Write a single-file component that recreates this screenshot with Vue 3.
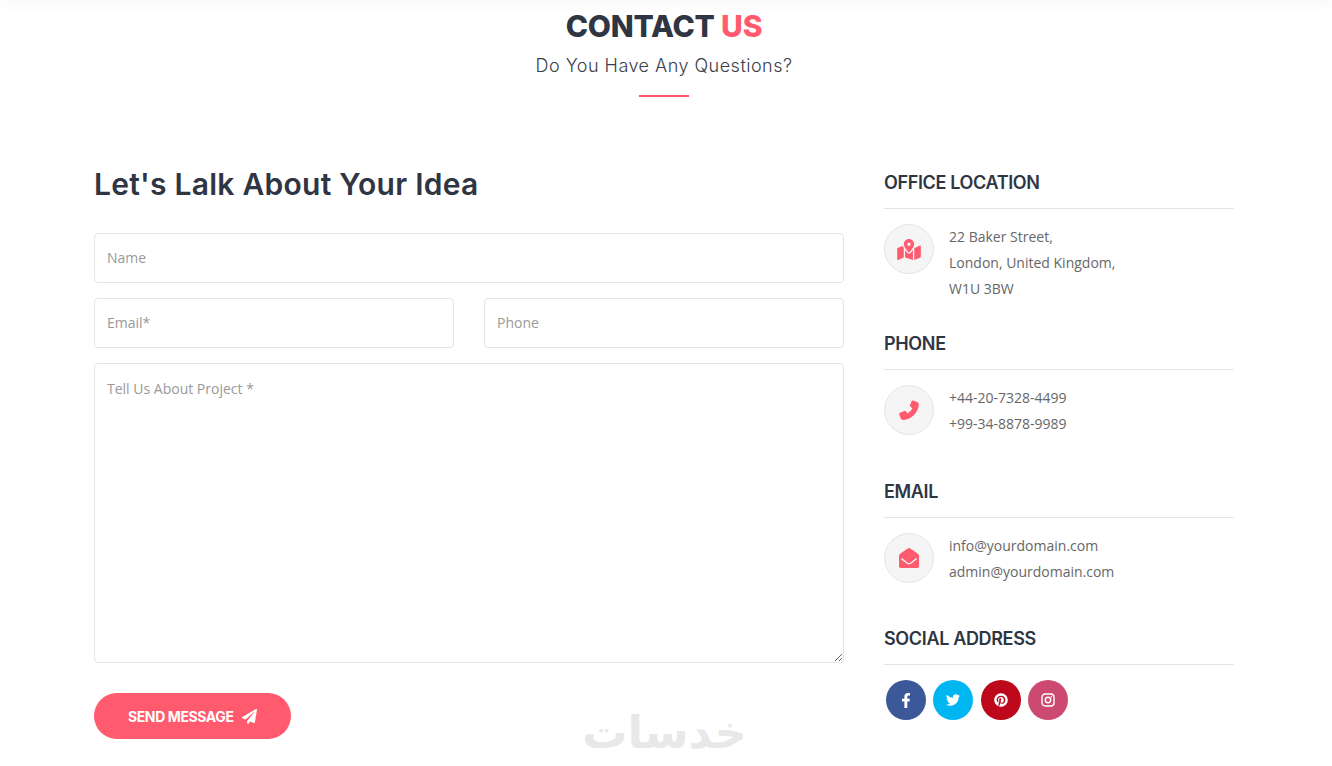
<script setup>
const locations = ['22 Baker Street,', 'London, United Kingdom,', 'W1U 3BW']
const phones = ['+44-20-7328-4499', '+99-34-8878-9989']
const emails = ['info@yourdomain.com', 'admin@yourdomain.com']
</script>

<template>
  <div class="page">
    <div class="topbar"></div>
    <header class="title">
      <h1>CONTACT <span>US</span></h1>
      <p>Do You Have Any Questions?</p>
      <i class="rule"></i>
    </header>
    <main class="columns">
      <form class="form" @submit.prevent>
        <h2>Let's Lalk About Your Idea</h2>
        <input class="field" placeholder="Name" />
        <div class="pair">
          <input class="field" placeholder="Email*" />
          <input class="field" placeholder="Phone" />
        </div>
        <textarea class="field area" placeholder="Tell Us About Project *"></textarea>
        <button class="send" type="submit">
          SEND MESSAGE
          <svg viewBox="0 0 512 512" width="15" height="15"><path fill="currentColor" d="M476 3.2L12.5 270.6c-18.1 10.4-15.8 35.6 2.2 43.2L121 358.4l287.3-253.2c5.5-4.9 13.3 2.6 8.6 8.3L176 407v80.5c0 23.6 28.5 32.9 42.5 15.8L282 426l124.6 52.2c14.2 6 30.4-2.9 33-18.2l72-432C515 7.8 493.3-6.8 476 3.2z"/></svg>
        </button>
      </form>
      <aside class="side">
        <section class="block">
          <h3>OFFICE LOCATION</h3>
          <div class="item">
            <span class="badge"><svg viewBox="0 0 576 512" width="24" height="21"><path fill="currentColor" d="M288 0c-69.59 0-126 56.41-126 126 0 56.26 82.35 158.8 113.9 196.02 6.39 7.54 17.82 7.54 24.2 0C331.65 284.8 414 182.26 414 126 414 56.41 357.59 0 288 0zm0 168c-23.2 0-42-18.8-42-42s18.8-42 42-42 42 18.8 42 42-18.8 42-42 42zM20.12 215.95A32.006 32.006 0 0 0 0 245.66v250.32c0 11.32 11.43 19.06 21.94 14.86L160 448V214.92c-8.84-15.98-16.07-31.54-21.25-46.42L20.12 215.95zM288 359.67c-14.07 0-27.38-6.18-36.51-16.96-19.66-23.2-40.57-49.62-59.49-76.72V448l192 64V266c-18.92 27.09-39.82 53.52-59.49 76.72-9.13 10.77-22.44 16.95-36.51 16.95zm266.06-198.51L416 224v288l139.88-55.95A31.996 31.996 0 0 0 576 426.34V176.02c0-11.32-11.43-19.06-21.94-14.86z"/></svg></span>
            <div class="lines"><div v-for="l in locations" :key="l">{{ l }}</div></div>
          </div>
        </section>
        <section class="block">
          <h3>PHONE</h3>
          <div class="item">
            <span class="badge"><svg viewBox="0 0 20 20" width="20" height="20"><path fill="currentColor" d="M14 .6L18 2C19.3 2.5 20 3.6 19.8 5C18.8 13 12.5 19.3 4.6 19.9C3 20 2 19.3 1.5 18L.2 14.4C0 13.7 .3 13 1 12.7L5.4 10.9C6 10.7 6.6 10.9 7 11.4L8.4 13.2C10.6 12.2 12.4 10.3 13.4 8.2L11.5 6.8C11 6.4 10.8 5.8 11 5.2L12.6 1.3C12.9 .6 13.4 .4 14 .6Z"/></svg></span>
            <div class="lines"><div v-for="l in phones" :key="l">{{ l }}</div></div>
          </div>
        </section>
        <section class="block">
          <h3>EMAIL</h3>
          <div class="item">
            <span class="badge"><svg viewBox="0 0 512 512" width="20" height="20"><path fill="currentColor" d="M512 464c0 26.51-21.49 48-48 48H48c-26.51 0-48-21.49-48-48V200.724a48 48 0 0 1 18.387-37.776c24.913-19.529 45.501-35.365 164.2-121.511C199.412 29.17 232.797-.347 256 .003c23.198-.354 56.596 29.172 73.413 41.433 118.687 86.137 139.303 101.995 164.2 121.512A48 48 0 0 1 512 200.724V464zm-65.666-196.605c-2.563-3.728-7.7-4.595-11.339-1.907-22.845 16.873-55.462 40.705-105.582 77.079-16.825 12.266-50.21 41.781-73.413 41.43-23.211.344-56.559-29.143-73.413-41.43-50.114-36.37-82.734-60.204-105.582-77.079-3.639-2.688-8.776-1.821-11.339 1.907l-9.072 13.196a7.998 7.998 0 0 0 1.839 10.967c22.887 16.899 55.454 40.69 105.303 76.868 20.274 14.781 56.524 47.813 92.264 47.573 35.724.242 71.961-32.771 92.263-47.573 49.85-36.179 82.418-59.97 105.303-76.868a7.998 7.998 0 0 0 1.839-10.967l-9.071-13.196z"/></svg></span>
            <div class="lines"><div v-for="l in emails" :key="l">{{ l }}</div></div>
          </div>
        </section>
        <section class="block social">
          <h3>SOCIAL ADDRESS</h3>
          <div class="links">
            <a class="fb"><svg viewBox="0 0 320 512" width="10" height="15"><path fill="currentColor" d="M279.14 288l14.22-92.66h-88.91v-60.13c0-25.35 12.42-50.06 52.24-50.06h40.42V6.26S260.43 0 225.36 0c-73.22 0-121.08 44.38-121.08 124.72v70.62H22.89V288h81.39v224h100.17V288z"/></svg></a>
            <a class="tw"><svg viewBox="0 0 512 512" width="14" height="14"><path fill="currentColor" d="M459.37 151.716c.325 4.548.325 9.097.325 13.645 0 138.72-105.583 298.558-298.558 298.558-59.452 0-114.68-17.219-161.137-47.106 8.447.974 16.568 1.299 25.34 1.299 49.055 0 94.213-16.568 130.274-44.832-46.132-.975-84.792-31.188-98.112-72.772 6.498.974 12.995 1.624 19.818 1.624 9.421 0 18.843-1.3 27.614-3.573-48.081-9.747-84.143-51.98-84.143-102.985v-1.299c13.969 7.797 30.214 12.67 47.431 13.319-28.264-18.843-46.781-51.005-46.781-87.391 0-19.492 5.197-37.36 14.294-52.954 51.655 63.675 129.3 105.258 216.365 109.807-1.624-7.797-2.599-15.918-2.599-24.04 0-57.828 46.782-104.934 104.934-104.934 30.213 0 57.502 12.67 76.67 33.137 23.715-4.548 46.456-13.32 66.599-25.34-7.798 24.366-24.366 44.833-46.132 57.827 21.117-2.273 41.584-8.122 60.426-16.243-14.292 20.791-32.161 39.308-52.628 54.253z"/></svg></a>
            <a class="pi"><svg viewBox="0 0 496 512" width="14" height="14"><path fill="currentColor" d="M496 256c0 137-111 248-248 248-25.6 0-50.2-3.9-73.4-11.1 10.1-16.5 25.2-43.5 30.8-65 3-11.6 15.4-59 15.4-59 8.1 15.4 31.7 28.5 56.8 28.5 74.8 0 128.7-68.8 128.7-154.3 0-81.9-66.9-143.2-152.9-143.2-107 0-163.9 71.8-163.9 150.1 0 36.4 19.4 81.7 50.3 96.1 4.7 2.2 7.2 1.2 8.3-3.3.8-3.4 5-20.3 6.9-28.1.6-2.5.3-4.7-1.7-7.1-10.1-12.5-18.3-35.3-18.3-56.6 0-54.7 41.4-107.6 112-107.6 60.9 0 103.6 41.5 103.6 100.9 0 67.1-33.9 113.6-78 113.6-24.3 0-42.6-20.1-36.7-44.8 7-29.5 20.5-61.3 20.5-82.6 0-19-10.2-34.9-31.4-34.9-24.9 0-44.9 25.7-44.9 60.2 0 22 7.4 36.8 7.4 36.8s-24.5 103.8-29 123.2c-5 21.4-3 51.6-.9 71.2C65.4 450.9 0 361.1 0 256 0 119 111 8 248 8s248 111 248 248z"/></svg></a>
            <a class="ig"><svg viewBox="0 0 14 14" width="14" height="14"><rect x="1" y="1" width="12" height="12" rx="3.2" fill="none" stroke="currentColor" stroke-width="1.4"/><circle cx="7" cy="7" r="2.7" fill="none" stroke="currentColor" stroke-width="1.4"/><circle cx="10.4" cy="3.6" r=".8" fill="currentColor"/></svg></a>
          </div>
        </section>
      </aside>
    </main>
    <div class="watermark" dir="rtl" lang="fa">خدسات</div>
  </div>
</template>

<style>
html, body { margin: 0; background: #fff; overflow: hidden; }
</style>

<style scoped>
.page {
  position: relative;
  height: 766px;
  overflow: hidden;
  background: #fff;
  font-family: "Open Sans", "Liberation Sans", sans-serif;
  font-size: 14px;
  color: #666;
}
.topbar {
  height: 0;
  box-shadow: 0 0 14px 3px rgba(0, 0, 0, 0.05);
}
.title {
  width: 1328px;
  padding-top: 8px;
  text-align: center;
  color: #2f3542;
}
h1 {
  margin: 0;
  font-family: Inter, sans-serif;
  font-size: 30px;
  font-weight: 800;
  line-height: 36px;
  letter-spacing: -0.2px;
}
h1 span, .rule { color: #ff5a6e; }
.title p {
  margin: 9px 0 0;
  font-family: Inter, sans-serif;
  font-size: 18px;
  font-weight: 300;
  line-height: 26px;
  letter-spacing: 0.48px;
  color: #3a404c;
}
.rule {
  display: block;
  width: 50px;
  height: 2px;
  margin: 16px auto 0;
  background: #ff5a6e;
}
.columns {
  display: flex;
  gap: 40px;
  padding: 0 98px 0 94px;
  margin-top: 69px;
}
.form { width: 750px; flex: none; }
h2 {
  margin: 0 0 31px;
  font-family: Inter, sans-serif;
  font-size: 30px;
  font-weight: 600;
  line-height: 36px;
  letter-spacing: 0.26px;
  color: #2f3542;
}
.field {
  display: block;
  box-sizing: border-box;
  width: 100%;
  height: 50px;
  padding: 0 12px 2px;
  border: 1px solid #e5e5e5;
  border-radius: 4px;
  background: #fff;
  font: 14px/20px "Open Sans", sans-serif;
  color: #666;
  outline: none;
}
.field::placeholder { color: #999; opacity: 1; }
.pair {
  display: flex;
  gap: 30px;
  margin-top: 15px;
}
.area {
  height: 300px;
  margin-top: 15px;
  padding: 15px 12px;
}
.send {
  display: flex;
  align-items: center;
  gap: 8px;
  width: 197px;
  height: 46px;
  margin-top: 30px;
  padding: 0 0 0 34px;
  border: 0;
  border-radius: 23px;
  background: #ff5a6e;
  color: #fff;
  font-family: Inter, sans-serif;
  font-size: 14px;
  font-weight: 700;
  letter-spacing: -0.4px;
  white-space: nowrap;
}
.side { width: 350px; flex: none; padding-top: 6px; }
.block { margin-top: 31px; }
.block:first-child { margin-top: 0; }
.block.social { margin-top: 30px; }
h3 {
  margin: 0 0 15px;
  padding-bottom: 14px;
  border-bottom: 1px solid #e5e5e5;
  font-family: Inter, sans-serif;
  font-size: 18px;
  font-weight: 600;
  line-height: 22px;
  letter-spacing: -0.35px;
  color: #2f3542;
}
.item {
  display: flex;
  gap: 15px;
  min-height: 65px;
}
.badge {
  display: flex;
  align-items: center;
  justify-content: center;
  box-sizing: border-box;
  width: 50px;
  height: 50px;
  flex: none;
  border: 1px solid #e5e5e5;
  border-radius: 50%;
  background: #f5f5f5;
  color: #ff5a6e;
}
.lines { line-height: 26px; }
.links {
  display: flex;
  gap: 7.33px;
  padding-left: 2px;
}
.links a {
  display: flex;
  align-items: center;
  justify-content: center;
  width: 40px;
  height: 40px;
  border-radius: 50%;
  color: #fff;
}
.fb { background: #3b5998; }
.tw { background: #00b6f1; }
.pi { background: #bd081c; }
.ig { background: #cc4a72; }
.watermark {
  position: absolute;
  left: 585px;
  top: 703px;
  width: 162px;
  text-align: center;
  font-family: "DejaVu Sans", "Noto Sans", sans-serif;
  font-size: 45px;
  font-weight: 700;
  line-height: 60px;
  color: #e8e8e8;
}
</style>
